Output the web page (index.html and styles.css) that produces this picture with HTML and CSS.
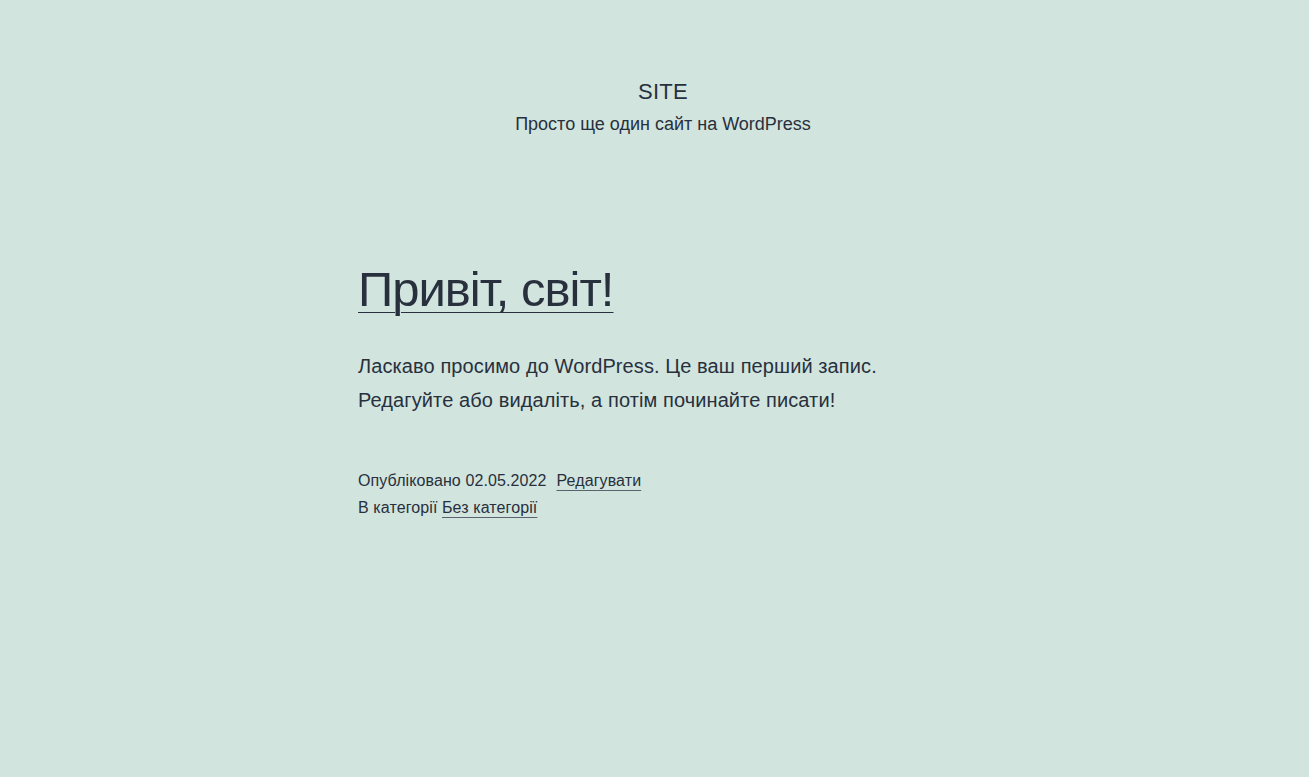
FILE: index.html
```html
<!DOCTYPE html>
<html lang="uk">
<head>
<meta charset="utf-8">
<title>SITE</title>
<link rel="stylesheet" href="styles.css">
</head>
<body>
<div class="page">
  <header class="site-header">
    <p class="site-title"><a href="#">SITE</a></p>
    <p class="site-description">Просто ще один сайт на WordPress</p>
  </header>
  <main class="site-main">
    <article class="post">
      <h2 class="entry-title"><a href="#">Привіт, світ!</a></h2>
      <div class="entry-content">
        <p>Ласкаво просимо до WordPress. Це ваш перший запис. Редагуйте або видаліть, а потім починайте писати!</p>
      </div>
      <footer class="entry-footer">
        <div class="meta-line"><span>Опубліковано 02.05.2022</span><a href="#">Редагувати</a></div>
        <div class="meta-line"><span>В категорії <a href="#">Без категорії</a></span></div>
      </footer>
    </article>
  </main>
</div>
</body>
</html>
```

FILE: styles.css
```css
html, body {
  margin: 0;
  padding: 0;
}
body {
  background: #d1e4dd;
  color: #28303d;
  font-family: "Liberation Sans", Arial, sans-serif;
  min-height: 777px;
}
a {
  color: #28303d;
}
.page {
  padding-left: 17px;
  padding-top: 78px;
}
.site-header {
  text-align: center;
}
.site-title {
  margin: 0;
  font-size: 22px;
  line-height: 28px;
  letter-spacing: 0.3px;
}
.site-title a {
  text-decoration: none;
}
.site-description {
  margin: 4px 0 0;
  font-size: 18px;
  line-height: 28px;
}
.site-main {
  width: 610px;
  margin: 0 auto;
  padding-top: 119px;
}
.entry-title {
  margin: 0;
  font-size: 49px;
  font-weight: 400;
  line-height: 64px;
  letter-spacing: -1px;
}
.entry-title a {
  text-decoration-thickness: 1px;
  text-underline-offset: 6px;
}
.entry-content {
  margin-top: 28px;
}
.entry-content p {
  margin: 0;
  font-size: 20px;
  line-height: 34px;
  letter-spacing: 0.1px;
}
.entry-footer {
  margin-top: 50px;
  font-size: 16px;
  line-height: 27px;
  letter-spacing: 0.1px;
}
.meta-line {
  display: flex;
  gap: 10px;
}
.entry-footer a {
  text-decoration-thickness: 1px;
  text-underline-offset: 4px;
  text-decoration-color: #5a636d;
}
```
